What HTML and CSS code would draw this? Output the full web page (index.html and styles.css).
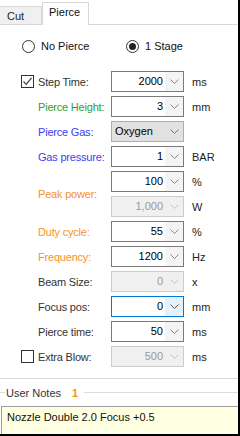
FILE: index.html
```html
<!DOCTYPE html>
<html lang="en">
<head>
  <meta charset="UTF-8" />
  <title>Pierce</title>
  <link rel="stylesheet" href="styles.css">
</head>
<body>
  <div class="window">
    <div class="tabs">
      <div class="tab">Cut</div>
      <div class="tab active">Pierce</div>
    </div>

    <div class="radios">
      <div class="radio"><span class="circle"></span>No Pierce</div>
      <div class="radio on"><span class="circle"></span>1 Stage</div>
    </div>

    <div class="form">
      <span class="check on"><svg width="11" height="11" viewBox="0 0 11 11"><polyline points="1.5,5.5 4.2,8.3 9.5,2" fill="none" stroke="#444" stroke-width="1.2"/></svg></span>
      <span class="lbl">Step Time:</span>
      <div class="box"><span class="val">2000</span><span class="btn"><svg width="9" height="5" viewBox="0 0 9 5"><polyline points="0.5,0.5 4.5,4.5 8.5,0.5" fill="none" stroke="currentColor"/></svg></span></div>
      <span class="unit">ms</span>

      <span class="lbl green">Pierce Height:</span>
      <div class="box"><span class="val">3</span><span class="btn"><svg width="9" height="5" viewBox="0 0 9 5"><polyline points="0.5,0.5 4.5,4.5 8.5,0.5" fill="none" stroke="currentColor"/></svg></span></div>
      <span class="unit">mm</span>

      <span class="lbl blue">Pierce Gas:</span>
      <div class="box sel"><span class="val">Oxygen</span><span class="btn"><svg width="9" height="5" viewBox="0 0 9 5"><polyline points="0.5,0.5 4.5,4.5 8.5,0.5" fill="none" stroke="currentColor"/></svg></span></div>

      <span class="lbl blue">Gas pressure:</span>
      <div class="box"><span class="val">1</span><span class="btn"><svg width="9" height="5" viewBox="0 0 9 5"><polyline points="0.5,0.5 4.5,4.5 8.5,0.5" fill="none" stroke="currentColor"/></svg></span></div>
      <span class="unit">BAR</span>

      <span class="lbl orange span2">Peak power:</span>
      <div class="box"><span class="val">100</span><span class="btn"><svg width="9" height="5" viewBox="0 0 9 5"><polyline points="0.5,0.5 4.5,4.5 8.5,0.5" fill="none" stroke="currentColor"/></svg></span></div>
      <span class="unit">%</span>
      <div class="box off"><span class="val">1,000</span><span class="btn"><svg width="9" height="5" viewBox="0 0 9 5"><polyline points="0.5,0.5 4.5,4.5 8.5,0.5" fill="none" stroke="currentColor"/></svg></span></div>
      <span class="unit">W</span>

      <span class="lbl orange">Duty cycle:</span>
      <div class="box"><span class="val">55</span><span class="btn"><svg width="9" height="5" viewBox="0 0 9 5"><polyline points="0.5,0.5 4.5,4.5 8.5,0.5" fill="none" stroke="currentColor"/></svg></span></div>
      <span class="unit">%</span>

      <span class="lbl orange">Frequency:</span>
      <div class="box"><span class="val">1200</span><span class="btn"><svg width="9" height="5" viewBox="0 0 9 5"><polyline points="0.5,0.5 4.5,4.5 8.5,0.5" fill="none" stroke="currentColor"/></svg></span></div>
      <span class="unit">Hz</span>

      <span class="lbl">Beam Size:</span>
      <div class="box off"><span class="val">0</span><span class="btn"><svg width="9" height="5" viewBox="0 0 9 5"><polyline points="0.5,0.5 4.5,4.5 8.5,0.5" fill="none" stroke="currentColor"/></svg></span></div>
      <span class="unit">x</span>

      <span class="lbl">Focus pos:</span>
      <div class="box focus"><span class="val">0</span><span class="btn"><svg width="9" height="5" viewBox="0 0 9 5"><polyline points="0.5,0.5 4.5,4.5 8.5,0.5" fill="none" stroke="currentColor"/></svg></span></div>
      <span class="unit">mm</span>

      <span class="lbl">Pierce time:</span>
      <div class="box"><span class="val">50</span><span class="btn"><svg width="9" height="5" viewBox="0 0 9 5"><polyline points="0.5,0.5 4.5,4.5 8.5,0.5" fill="none" stroke="currentColor"/></svg></span></div>
      <span class="unit">ms</span>

      <span class="check"></span>
      <span class="lbl">Extra Blow:</span>
      <div class="box off"><span class="val">500</span><span class="btn"><svg width="9" height="5" viewBox="0 0 9 5"><polyline points="0.5,0.5 4.5,4.5 8.5,0.5" fill="none" stroke="currentColor"/></svg></span></div>
      <span class="unit">ms</span>
    </div>

    <div class="sep"></div>

    <div class="notes-head">
      <span class="rule short"></span>
      <span class="notes-title">User Notes</span>
      <span class="count">1</span>
      <span class="rule"></span>
    </div>
    <div class="notes">Nozzle Double 2.0 Focus +0.5</div>
  </div>
</body>
</html>
```

FILE: styles.css
```css
body {
  margin: 0;
  font-family: "Liberation Sans", Arial, sans-serif;
  font-size: 11px;
  color: #000;
  background: #fff;
}

.window {
  width: 238px;
  height: 434px;
  border-right: 2px solid #000;
  border-bottom: 2px solid #000;
  overflow: hidden;
  display: flex;
  flex-direction: column;
}

/* tabs */
.tabs {
  display: flex;
  align-items: flex-end;
  height: 24px;
  border-bottom: 1px solid #d9d9d9;
}

.tab {
  height: 18px;
  width: 42px;
  padding-left: 7px;
  box-sizing: border-box;
  line-height: 18px;
  background: #f0f0f0;
  border: 1px solid #d9d9d9;
  border-bottom: none;
  border-left: none;
  color: #222;
}

.tab.active {
  height: 23px;
  width: 47px;
  padding-left: 6px;
  line-height: 19px;
  background: #fff;
  border-left: 1px solid #d9d9d9;
  margin-left: 0;
  margin-bottom: -1px;
  color: #111;
}

/* radios */
.radios {
  display: flex;
  margin-top: 13px;
  height: 16px;
  padding-left: 22px;
}

.radio {
  display: flex;
  align-items: center;
  width: 104px;
  color: #111;
}

.circle {
  width: 11px;
  height: 11px;
  border: 1px solid #333;
  border-radius: 50%;
  margin-right: 6px;
  display: flex;
  align-items: center;
  justify-content: center;
}

.radio.on .circle::after {
  content: "";
  width: 7px;
  height: 7px;
  border-radius: 50%;
  background: #222;
}

/* form grid */
.form {
  display: grid;
  grid-template-columns: 17px 73px 73px auto;
  grid-auto-rows: 21px;
  row-gap: 4px;
  margin-top: 17px;
  padding-left: 21px;
}

.check {
  grid-column: 1;
  align-self: center;
  width: 11px;
  height: 11px;
  border: 1px solid #333;
  display: flex;
}

.lbl {
  grid-column: 2;
  align-self: center;
  color: #333;
  letter-spacing: -0.2px;
  white-space: nowrap;
}

.lbl.span2 { grid-row: span 2; }
.green { color: #2f9e2f; }
.blue { color: #3c3cf5; }
.orange { color: #f7922a; }

.box {
  grid-column: 3;
  display: flex;
  border: 1px solid #7a7a7a;
  background: #fff;
  color: #888;
}

.val {
  flex: 1;
  text-align: right;
  padding-right: 2px;
  line-height: 19px;
  color: #000;
}

.btn {
  width: 18px;
  display: flex;
  align-items: center;
  justify-content: center;
  background: #f4f4f4;
}

.box.sel {
  background: #e1e1e1;
  border-color: #adadad;
  color: #777;
}

.box.sel .val {
  text-align: left;
  padding-left: 3px;
}

.box.sel .btn { background: #e1e1e1; }

.box.off {
  background: #f0f0f0;
  border-color: #cccccc;
  color: #c4c4c4;
}

.box.off .val { color: #9a9a9a; }
.box.off .btn { background: #f0f0f0; }

.box.focus {
  border-color: #0078d7;
  color: #555;
}

.box.focus .btn { background: #e5f1fb; }

.unit {
  grid-column: 4;
  align-self: center;
  padding-left: 8px;
  color: #222;
}

/* notes */
.sep {
  margin-top: 11px;
  border-top: 1px solid #dadada;
}

.notes-head {
  display: flex;
  align-items: center;
  height: 14px;
  margin-top: 7px;
}

.rule {
  flex: 1;
  border-top: 1px solid #dcdcdc;
  margin-left: 6px;
  margin-top: -2px;
}

.rule.short {
  flex: none;
  width: 5px;
  margin: -2px 1px 0 0;
}

.notes-title { color: #333; }

.count {
  margin-left: 11px;
  color: #ff8c1a;
  font-weight: bold;
}

.notes {
  margin-top: 6px;
  margin-left: 1px;
  flex: 1;
  background: #ffffe1;
  border-top: 1px solid #a0a0a0;
  border-left: 1px solid #a0a0a0;
  padding: 4px 0 0 5px;
  line-height: 13px;
  color: #111;
}
```
